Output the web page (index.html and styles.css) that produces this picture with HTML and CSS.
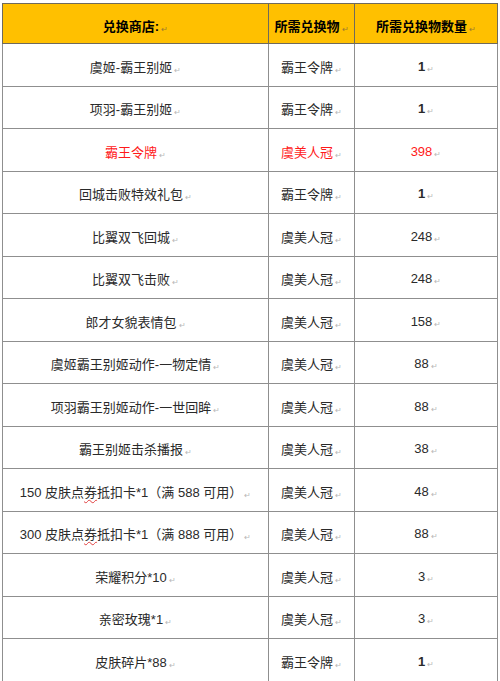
FILE: index.html
```html
<!DOCTYPE html>
<html lang="zh-CN">
<head>
<meta charset="utf-8">
<link rel="stylesheet" href="styles.css">
</head>
<body>
<table class="shop">
  <colgroup>
    <col class="c1"><col class="c2"><col class="c3">
  </colgroup>
  <thead>
    <tr class="head">
      <th>兑换商店:<span class="pm">↵</span></th>
      <th>所需兑换物<span class="pm">↵</span></th>
      <th>所需兑换物数量<span class="pm">↵</span></th>
    </tr>
  </thead>
  <tbody>
    <tr><td>虞姬-霸王别姬<span class="pm">↵</span></td><td>霸王令牌<span class="pm">↵</span></td><td class="num b">1<span class="pm">↵</span></td></tr>
    <tr><td>项羽-霸王别姬<span class="pm">↵</span></td><td>霸王令牌<span class="pm">↵</span></td><td class="num b">1<span class="pm">↵</span></td></tr>
    <tr class="hot"><td>霸王令牌<span class="pm">↵</span></td><td>虞美人冠<span class="pm">↵</span></td><td class="num">398<span class="pm">↵</span></td></tr>
    <tr><td>回城击败特效礼包<span class="pm">↵</span></td><td>霸王令牌<span class="pm">↵</span></td><td class="num b">1<span class="pm">↵</span></td></tr>
    <tr><td>比翼双飞回城<span class="pm">↵</span></td><td>虞美人冠<span class="pm">↵</span></td><td class="num">248<span class="pm">↵</span></td></tr>
    <tr><td>比翼双飞击败<span class="pm">↵</span></td><td>虞美人冠<span class="pm">↵</span></td><td class="num">248<span class="pm">↵</span></td></tr>
    <tr><td>郎才女貌表情包<span class="pm">↵</span></td><td>虞美人冠<span class="pm">↵</span></td><td class="num">158<span class="pm">↵</span></td></tr>
    <tr><td>虞姬霸王别姬动作-一物定情<span class="pm">↵</span></td><td>虞美人冠<span class="pm">↵</span></td><td class="num">88<span class="pm">↵</span></td></tr>
    <tr><td>项羽霸王别姬动作-一世回眸<span class="pm">↵</span></td><td>虞美人冠<span class="pm">↵</span></td><td class="num">88<span class="pm">↵</span></td></tr>
    <tr><td>霸王别姬击杀播报<span class="pm">↵</span></td><td>虞美人冠<span class="pm">↵</span></td><td class="num">38<span class="pm">↵</span></td></tr>
    <tr><td>150 皮肤点<span class="spell">券</span>抵扣卡*1（满 588 可用）<span class="pm">↵</span></td><td>虞美人冠<span class="pm">↵</span></td><td class="num">48<span class="pm">↵</span></td></tr>
    <tr><td>300 皮肤点<span class="spell">券</span>抵扣卡*1（满 888 可用）<span class="pm">↵</span></td><td>虞美人冠<span class="pm">↵</span></td><td class="num">88<span class="pm">↵</span></td></tr>
    <tr><td>荣耀积分*10<span class="pm">↵</span></td><td>虞美人冠<span class="pm">↵</span></td><td class="num">3<span class="pm">↵</span></td></tr>
    <tr><td>亲密玫瑰*1<span class="pm">↵</span></td><td>虞美人冠<span class="pm">↵</span></td><td class="num">3<span class="pm">↵</span></td></tr>
    <tr><td>皮肤碎片*88<span class="pm">↵</span></td><td>霸王令牌<span class="pm">↵</span></td><td class="num b">1<span class="pm">↵</span></td></tr>
  </tbody>
</table>
</body>
</html>
```
FILE: styles.css
```css
html, body {
  margin: 0;
  padding: 0;
  background: #ffffff;
}
body {
  padding: 3px 0 0 2px;
  font-family: "Liberation Sans", "Noto Sans CJK SC", sans-serif;
  color: #2a2a2a;
}
.shop {
  border-collapse: collapse;
  table-layout: fixed;
  width: 495px;
  font-size: 13px;
}
.c1 { width: 266px; }
.c2 { width: 86px; }
.c3 { width: 143px; }
.shop th,
.shop td {
  border: 1px solid #8f8f8f;
  text-align: center;
  vertical-align: middle;
  padding: 3px 0 0 0;
  white-space: nowrap;
}
.head th {
  background: #ffc000;
  color: #000000;
  font-weight: bold;
  height: 36px;
  border-color: #6f6a5c;
}
.shop tbody tr {
  height: 42.5px;
}
.num { font-size: 13px; }
.num.b { font-weight: bold; }
.hot td { color: #ff1a1a; }
.pm {
  font-size: 8px;
  font-weight: normal;
  color: #b8b8b8;
  margin-left: 2px;
  vertical-align: -1px;
}
.head .pm { color: #9a7a30; }
.hot .pm { color: #b8b8b8; }
.spell {
  text-decoration: underline wavy #e04040;
  text-decoration-thickness: 1px;
  text-underline-offset: 2px;
}
```
